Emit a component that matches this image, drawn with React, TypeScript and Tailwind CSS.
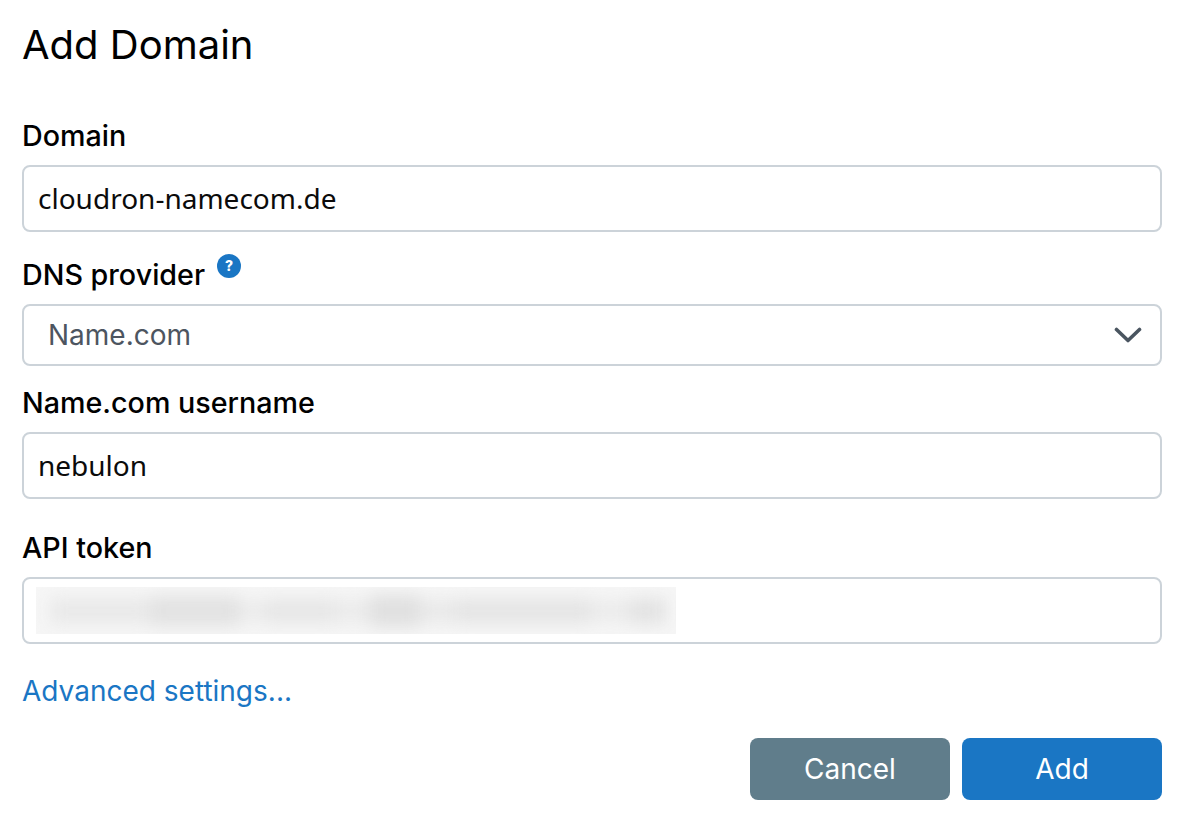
import React from "react";

function Label({ children, className = "" }: { children: React.ReactNode; className?: string }) {
  return <div className={`text-[28.7px] leading-[36px] font-medium text-black ${className}`}>{children}</div>;
}

function Field({ children, className = "" }: { children?: React.ReactNode; className?: string }) {
  return (
    <div className={`flex items-center h-[67px] rounded-[8px] border-2 border-[#ccd3d9] bg-white pr-[15px] font-['Noto_Sans',sans-serif] text-[28px] text-[#0b0b0b] ${className}`}>
      {children}
    </div>
  );
}

export default function App() {
  return (
    <div className="w-[1180px] h-[820px] bg-white pl-[22px] pr-[18px] font-['Inter',sans-serif] overflow-hidden">
      <h1 className="text-[40px] leading-[46px] font-normal text-black pt-[22px] h-[68px]">Add Domain</h1>
      <Label className="mt-[50px]">Domain</Label>
      <Field className="mt-[11px] pl-[14px] pb-[2px]">cloudron-namecom.de</Field>

      <div className="mt-[25px] flex items-start h-[36px]">
        <Label>DNS provider</Label>
        <svg width="24" height="24" viewBox="0 0 24 24" className="ml-[12px] -mt-[3px]">
          <circle cx="12" cy="12" r="12" fill="#1a76c4" />
          <text x="12" y="17" textAnchor="middle" fontSize="14" fontWeight="800" fill="#fff" fontFamily="Inter, sans-serif">?</text>
        </svg>
      </div>
      <div className="mt-[11px] flex items-center justify-between h-[62px] rounded-[8px] border-2 border-[#ccd3d9] bg-white pl-[24px] pr-[18px] text-[28px] text-[#4d5560]">
        <span>Name.com</span>
        <svg width="28" height="18" viewBox="0 0 28 18" fill="none">
          <path d="M2.5 3.5 L14 14.5 L25.5 3.5" stroke="#4a5560" strokeWidth="3.6" strokeLinecap="round" strokeLinejoin="round" />
        </svg>
      </div>

      <Label className="mt-[19px]">Name.com username</Label>
      <Field className="mt-[11px] pl-[14px] pb-[2px]">nebulon</Field>

      <Label className="mt-[31px]">API token</Label>
      <Field className="mt-[11px] pl-[12px]">
        <div className="w-[640px] h-[47px] overflow-hidden bg-[#f6f6f6]">
          <div className="flex items-center h-full pl-[14px] blur-[8px]">
            <span className="w-[100px] h-[26px] bg-[#e9e9e9]" />
            <span className="w-[90px] h-[30px] bg-[#e2e2e2]" />
            <span className="w-[24px] h-[22px] bg-[#ececec]" />
            <span className="w-[70px] h-[26px] bg-[#e7e7e7]" />
            <span className="w-[36px] h-[24px] bg-[#ebebeb]" />
            <span className="w-[50px] h-[32px] bg-[#e0e0e0]" />
            <span className="w-[36px] h-[24px] bg-[#e9e9e9]" />
            <span className="w-[134px] h-[26px] bg-[#e5e5e5]" />
            <span className="w-[40px] h-[22px] bg-[#ebebeb]" />
            <span className="w-[36px] h-[26px] bg-[#e3e3e3]" />
          </div>
        </div>
      </Field>

      <div className="mt-[29px] text-[28px] leading-[36px] text-[#1a76c4]">Advanced settings...</div>

      <div className="mt-[29px] flex justify-end gap-[12px]">
        <button className="w-[200px] h-[62px] rounded-[8px] bg-[#607d8b] text-white text-[28px]">Cancel</button>
        <button className="w-[200px] h-[62px] rounded-[8px] bg-[#1a76c4] text-white text-[28px]">Add</button>
      </div>
    </div>
  );
}
